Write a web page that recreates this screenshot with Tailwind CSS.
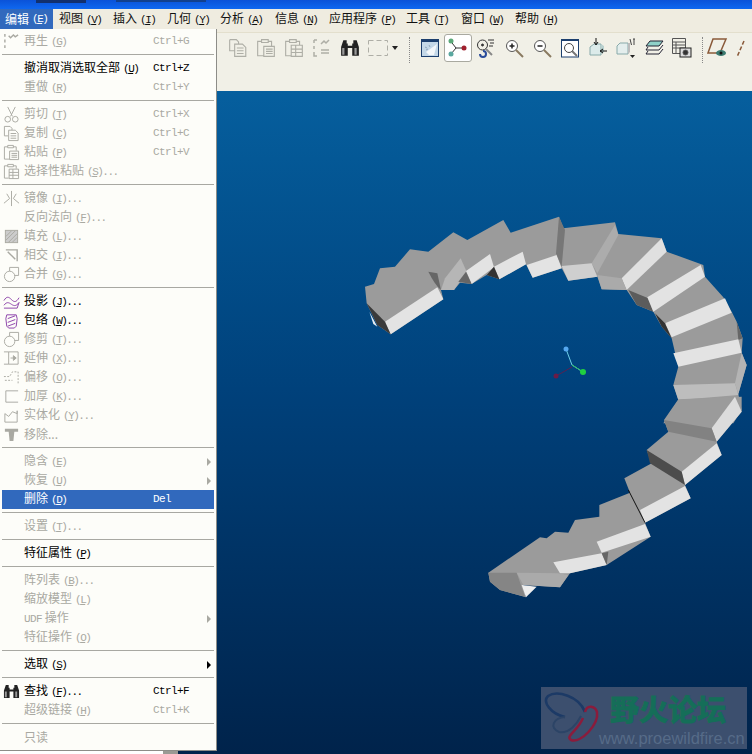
<!DOCTYPE html>
<html lang="zh-CN">

<head>
  <meta charset="UTF-8" />
  <title>Pro/E 编辑菜单</title>
  <script src="https://cdn.jsdelivr.net/npm/@tailwindcss/browser@4"></script>
</head>

<body class="bg-[#ece9d8]">
  <!-- icons shared by menu and toolbar -->
  <svg class="hidden">
    <symbol id="i-copy" viewBox="0 0 18 18"><path d="M1.500 1.500h6l2 2v2M1.500 1.500v10h4M6 5.500h7l3 3v8H6zM8 9h6M8 11.500h6M8 14h6" fill="none" stroke="currentColor" /></symbol>
    <symbol id="i-paste" viewBox="0 0 18 18"><path d="M5 3H1.500v13H7M11 3h3v4M5 1.500h6V4H5zM7 7.500h9.500v9H7zM9 10h6M9 12h6M9 14h6" fill="none" stroke="currentColor" /></symbol>
    <symbol id="i-pastes" viewBox="0 0 18 18"><path d="M5 3H1.500v13H6M11 3h3v3M5 1.500h6V4H5zM6.500 6.500h10v10h-10zM6.500 10h10M6.500 13h10M10.500 6.500v10" fill="none" stroke="currentColor" /></symbol>
    <symbol id="i-regen" viewBox="0 0 18 18"><path d="M2 1v3M2 7v3M2 13v3M6 3l2 2 3-3 2 2 3-2" fill="none" stroke="currentColor" stroke-width="1.500" /></symbol>
    <symbol id="i-bino" viewBox="0 0 18 18"><path d="M1 8l2-6h3v3h1v2h4V5h1V2h3l2 6v8h-6V9H7v7H1z" fill="#222" /><path d="M2 9h2v6H2zM13 9h2v6h-2z" fill="#999" /></symbol>
    <symbol id="i-merge" viewBox="0 0 18 18"><circle cx="7" cy="11" r="5.500" fill="none" stroke="currentColor" /><path d="M7 5.500V1.500h9.500V10H12.500" fill="none" stroke="currentColor" /></symbol>
  </svg>

  <div class="relative w-[752px] h-[754px] overflow-hidden flex flex-col font-['Noto_Sans_CJK_SC',sans-serif] text-[12px] leading-none [&_i]:not-italic [&_i]:font-['Liberation_Mono',monospace] [&_i]:text-[11px] [&_i]:tracking-[-1.500px] [&_i]:ml-[3px]">

    <!-- title bar, cut off by the crop -->
    <div class="h-[9px] shrink-0 flex items-start bg-gradient-to-b from-[#0b52d8] to-[#0f68f0]">
      <div class="ml-[36px] w-[50px] h-[3px] bg-[#12306e]"></div>
      <div class="ml-[30px] w-[90px] h-[2px] bg-[#12408e]"></div>
    </div>

    <!-- menu bar -->
    <div class="h-[23px] shrink-0 bg-[#efece0] text-[#111]">
      <div class="flex h-[20px] items-center">
        <div class="flex h-full w-[53px] items-center pl-[5px] bg-[#3169bd] text-white">编辑<i>(<u>E</u>)</i></div>
        <div class="w-[54px] pl-[6px]">视图<i>(<u>V</u>)</i></div>
        <div class="w-[54px] pl-[6px]">插入<i>(<u>I</u>)</i></div>
        <div class="w-[53px] pl-[6px]">几何<i>(<u>Y</u>)</i></div>
        <div class="w-[55px] pl-[6px]">分析<i>(<u>A</u>)</i></div>
        <div class="w-[54px] pl-[6px]">信息<i>(<u>N</u>)</i></div>
        <div class="w-[77px] pl-[6px]">应用程序<i>(<u>P</u>)</i></div>
        <div class="w-[55px] pl-[6px]">工具<i>(<u>T</u>)</i></div>
        <div class="w-[54px] pl-[6px]">窗口<i>(<u>W</u>)</i></div>
        <div class="w-[54px] pl-[6px]">帮助<i>(<u>H</u>)</i></div>
      </div>
    </div>

    <!-- toolbar -->
    <div class="h-[59px] shrink-0 bg-[#f1f0e7] border-t border-[#e3dfcd] pl-[224px] flex items-start text-[#aeaea6]">
      <div class="w-[28px] h-[28px] mt-[1px] flex items-center justify-center"><svg class="w-[20px] h-[20px]"><use href="#i-copy" /></svg></div>
      <div class="w-[28px] h-[28px] mt-[1px] flex items-center justify-center"><svg class="w-[20px] h-[20px]"><use href="#i-paste" /></svg></div>
      <div class="w-[28px] h-[28px] mt-[1px] flex items-center justify-center"><svg class="w-[20px] h-[20px]"><use href="#i-pastes" /></svg></div>
      <div class="w-[28px] h-[28px] mt-[1px] flex items-center justify-center"><svg class="w-[20px] h-[20px]" viewBox="0 0 20 20" fill="none" stroke="currentColor" stroke-width="1.500"><path d="M2 2h3M2 2v3M2 8v3M2 14v4h3M9 6l3-3 2 2 3-3M9 12h8M9 15h8" /></svg></div>
      <div class="w-[28px] h-[28px] mt-[1px] flex items-center justify-center"><svg class="w-[20px] h-[20px]"><use href="#i-bino" /></svg></div>
      <div class="w-[28px] h-[28px] mt-[1px] flex items-center justify-center"><svg class="w-[20px] h-[16px]" viewBox="0 0 20 16" fill="none" stroke="currentColor"><path d="M.5 .5h19v15H.5z" stroke-dasharray="5 3" /></svg></div>
      <div class="w-[9px] h-[28px] mt-[1px] flex items-center"><div class="w-0 h-0 border-x-[3px] border-x-transparent border-t-[4px] border-t-[#222]"></div></div>
      <div class="ml-[8px] mt-[4px] h-[26px] w-px border-l border-dotted border-[#888]"></div>
      <div class="ml-[6px] w-[28px] h-[28px] mt-[1px] flex items-center justify-center">
        <svg class="w-[18px] h-[18px]" viewBox="0 0 18 18"><rect width="18" height="18" fill="#1c3f6e" /><rect x="1" y="3" width="16" height="14" fill="#c4d8e8" /><path d="M16 5L5 13l3 3h5z" fill="#f4f8fb" /><path d="M4 8l2 1M5 11l2-1M8 6l1 2" stroke="#8fa7bd" /></svg>
      </div>
      <!-- datum display toggle, pressed -->
      <div class="w-[28px] h-[28px] mt-[1px] flex items-center justify-center rounded-[3px] bg-white border border-[#a9a9a0]">
        <svg class="w-[20px] h-[20px]" viewBox="0 0 20 20" fill="none"><path d="M2.500 3L8 10l-5 6M8 10h10" stroke="#333" /><circle cx="3" cy="3" r="2.500" fill="#5aa878" /><circle cx="3" cy="16" r="2.500" fill="#5aa8a0" /><circle cx="16" cy="10" r="2.500" fill="#a0202e" /></svg>
      </div>
      <div class="w-[28px] h-[28px] mt-[1px] flex items-center justify-center">
        <svg class="w-[20px] h-[20px]" viewBox="0 0 20 20" fill="none" stroke="#333"><circle cx="6.500" cy="7" r="5" /><circle cx="6.500" cy="7" r="1" fill="#333" /><path d="M10 11l6 6" stroke="#888" stroke-width="2" /><path d="M12 2h6M14 5h4M13 8h4" /><path d="M4 16a3 3 0 1 0 3-3" stroke="#2a4c9a" stroke-width="2" /></svg>
      </div>
      <div class="w-[28px] h-[28px] mt-[1px] flex items-center justify-center">
        <svg class="w-[19px] h-[19px]" viewBox="0 0 19 19" fill="none"><circle cx="7" cy="7" r="5.500" fill="#fff" stroke="#555" /><path d="M4.500 7h5M7 4.500v5" stroke="#222" stroke-width="1.500" /><path d="M11 11l7 7" stroke="#8a7a60" stroke-width="2" /></svg>
      </div>
      <div class="w-[28px] h-[28px] mt-[1px] flex items-center justify-center">
        <svg class="w-[19px] h-[19px]" viewBox="0 0 19 19" fill="none"><circle cx="7" cy="7" r="5.500" fill="#fff" stroke="#555" /><path d="M4.500 7h5" stroke="#222" stroke-width="1.500" /><path d="M11 11l7 7" stroke="#8a7a60" stroke-width="2" /></svg>
      </div>
      <div class="w-[28px] h-[28px] mt-[1px] flex items-center justify-center">
        <svg class="w-[18px] h-[19px]" viewBox="0 0 18 19" fill="none"><rect x=".5" y="1" width="17" height="17" fill="#fff" stroke="#1c3f6e" /><rect x="0" y="0" width="18" height="2" fill="#1c3f6e" /><circle cx="8" cy="9" r="4.500" stroke="#444" /><path d="M11 12l5 5" stroke="#777" stroke-width="2" /></svg>
      </div>
      <div class="w-[28px] h-[28px] mt-[1px] flex items-center justify-center">
        <svg class="w-[19px] h-[20px]" viewBox="0 0 19 20" fill="none"><path d="M1 9l4-3h7v11H1z" fill="#dcebea" stroke="#8aa" /><path d="M12 6v11l3-3V8z" fill="#b8d0ce" /><path d="M7 0v6M5 4l2 3 2-3M18 13h-6M14 11l-3 2 3 2" stroke="#111" /></svg>
      </div>
      <div class="w-[28px] h-[28px] mt-[1px] flex items-center justify-center relative">
        <svg class="w-[20px] h-[20px]" viewBox="0 0 20 20" fill="none"><path d="M1 8l3-3h8v11H1z" fill="#e4eeed" stroke="#8aa" /><path d="M12 5v11l2-2V5z" fill="#bbb" /><path d="M14 1l1.500 6M18 1v6M19 1h-2" stroke="#444" /><path d="M14 17h5l-2.500 3z" fill="#222" /></svg>
      </div>
      <div class="w-[28px] h-[28px] mt-[1px] flex items-center justify-center">
        <svg class="w-[19px] h-[17px]" viewBox="0 0 19 17" fill="none" stroke="#223"><path d="M5 1h13l-4 5H1z" fill="#8fd0c8" /><path d="M3 7L1 10h13l4-5M3 11l-2 3h13l4-5" /></svg>
      </div>
      <div class="w-[28px] h-[28px] mt-[1px] flex items-center justify-center">
        <svg class="w-[20px] h-[20px]" viewBox="0 0 20 20" fill="none" stroke="#555"><path d="M.5 .5h13v15H.5zM.5 4h13M.5 7h13M.5 10h13M4 4v11" /><rect x="8" y="10" width="11" height="9" fill="#ddd" stroke="#222" /><circle cx="13.500" cy="14.500" r="2.500" fill="#333" /></svg>
      </div>
      <div class="ml-[6px] mt-[4px] h-[26px] w-px border-l border-dotted border-[#888]"></div>
      <div class="w-[28px] h-[28px] mt-[1px] flex items-center justify-center">
        <svg class="w-[21px] h-[20px]" viewBox="0 0 21 20" fill="none"><path d="M6 1h13l-6 14H1z" stroke="#8a5a3a" stroke-width="1.500" /><ellipse cx="14" cy="15" rx="5" ry="3" fill="#3c7a70" /><circle cx="14" cy="15" r="1.500" fill="#111" /></svg>
      </div>
      <div class="ml-[5px] mt-[7px]">
        <svg class="w-[9px] h-[20px]" viewBox="0 0 9 20" fill="none"><path d="M8 1L1 17" stroke="#8a5a3a" stroke-width="1.500" stroke-dasharray="4 2" /></svg>
      </div>
    </div>

    <!-- work area -->
    <div class="flex-1 flex min-h-0">
      <div class="w-[178px] shrink-0 bg-white flex items-end justify-end">
        <div class="w-[15px] h-[4px] bg-[#9a9a94]"></div>
      </div>
      <div class="relative flex-1 bg-gradient-to-b from-[#065f9e] via-[#00417b] via-45% to-[#00234b]">
        <!-- 3D stair model -->
        <svg class="block w-[574px] h-[663px]" viewBox="178 91 574 663">
          <g transform="translate(360 210) scale(.33333)">
            <!-- body behind the faces, closes the cracks between steps -->
            <path d="M15 230L42 222L60 175L105 170L150 118L205 125L280 67L322 90L430 30L452 68L597 20L610 55L765 37L775 72L905 85L920 125L1030 165L1035 200L1090 262L1115 305L1130 335L1148 385L1145 428L1160 465L1135 552L1145 600L1120 640L910 640L955 570L940 525L955 470L935 385L905 350L880 305L830 285L800 240L725 238L712 200L625 212L605 175L518 203L498 163L418 208L380 195L335 222L300 218L282 240L243 240L250 268L92 373L52 345L20 280z" fill="#9b9b9b" />
            <!-- step A -->
            <path d="M75 335L232 232L250 268L92 373z" fill="#e3e3e3" />
            <path d="M20 280L75 335L92 373L52 345z" fill="#3a3a3a" />
            <path d="M28 305L52 350L40 342z" fill="#e8eef4" />
            <!-- step B -->
            <path d="M205 185Q225 225 243 240L232 190z" fill="#666" />
            <path d="M302 145L320 185L282 240L243 240L255 205z" fill="#b6b6b6" />
            <!-- step C -->
            <path d="M318 183L390 132L402 172L335 222z" fill="#e3e3e3" />
            <path d="M295 215L318 185L335 222z" fill="#666" />
            <!-- step D -->
            <path d="M402 170L488 125L498 163L418 208z" fill="#e3e3e3" />
            <path d="M380 195L402 170L418 208z" fill="#333" />
            <path d="M500 165L590 135L605 175L518 203z" fill="#e3e3e3" />
            <path d="M597 20L615 60L605 170L588 130z" fill="#777" />
            <!-- step E -->
            <path d="M695 160L765 45L775 75L712 190z" fill="#acacac" />
            <path d="M605 168L695 160L712 200L625 212z" fill="#cfcfcf" />
            <!-- step F -->
            <path d="M905 85L920 125L800 240L785 205z" fill="#e0e0e0" />
            <path d="M712 195L785 205L800 240L725 238z" fill="#aaa" />
            <!-- step G -->
            <path d="M805 240L865 265L880 305L830 285z" fill="#5c5c5c" />
            <path d="M1022 165L1035 200L880 305L862 262z" fill="#e3e3e3" />
            <!-- step H -->
            <path d="M1095 265L1115 308L935 382L915 340z" fill="#e3e3e3" />
            <path d="M885 310L915 340L935 385L905 350z" fill="#333" />
            <!-- step I -->
            <path d="M1130 335L1148 385L1135 390z" fill="#666" />
            <path d="M940 430L1135 388L1145 428L955 470z" fill="#e3e3e3" />
            <!-- step J -->
            <path d="M1145 428L1160 465L1135 552L1125 520z" fill="#b4b4b4" />
            <path d="M940 525L1125 520L1135 555L955 570z" fill="#bdbdbd" />
          </g>
          <g transform="translate(480 400) scale(.33333)">
            <path d="M595 -2L785 -10L785 35L710 125L725 165L615 255L632 295L495 368L512 410L380 495L270 520L240 562L130 555L138 592L60 570L30 545L25 518L180 412L200 415L225 395L265 398L285 360L358 350L358 315L450 278L433 235L515 190L500 150L565 95L552 60z" fill="#9b9b9b" />
            <!-- step K -->
            <path d="M765 -10L785 35L710 125L695 85z" fill="#dcdcdc" />
            <path d="M552 60L695 85L710 125L565 95z" fill="#828282" />
            <!-- step L -->
            <path d="M605 215L710 130L725 165L615 255z" fill="#e3e3e3" />
            <path d="M500 150L605 215L615 255L510 190z" fill="#4c4c4c" />
            <!-- step M -->
            <path d="M480 330L615 258L632 295L495 368z" fill="#e3e3e3" />
            <path d="M445 270L495 368" stroke="#111" stroke-width="3" />
            <!-- step N -->
            <path d="M350 425L495 372L512 410L365 458z" fill="#e3e3e3" />
            <!-- step O -->
            <path d="M220 487L365 460L380 495L270 520L240 520z" fill="#e3e3e3" />
            <path d="M365 460L385 455L380 495z" fill="#666" />
            <!-- step P -->
            <path d="M25 518L110 518L135 590L60 570L30 545z" fill="#858585" />
            <path d="M110 518L235 520L265 525L240 562L130 555z" fill="#aaa" />
            <path d="M125 555L170 560L138 592z" fill="#eee" />
          </g>
          <!-- datum triad -->
          <path d="M566 349L572 365L583 372" fill="none" stroke="#6fd0e8" />
          <path d="M572 365L583 372" fill="none" stroke="#30c060" />
          <path d="M572 367L556 376" fill="none" stroke="#5a2050" />
          <circle cx="566" cy="349" r="2.500" fill="#55a8f0" />
          <circle cx="583" cy="372" r="3" fill="#20d040" />
          <circle cx="556" cy="376" r="2.500" fill="#6a1c48" />
        </svg>

        <!-- forum watermark -->
        <div class="absolute right-[5px] bottom-[5px] w-[206px] h-[62px] bg-[#3c4f6e] overflow-hidden">
          <svg class="absolute left-[2px] top-[3px] w-[58px] h-[56px]" viewBox="0 0 58 56" fill="none">
            <path d="M42 22C36 6 14 0 5 6C-1 12 8 24 22 27" stroke="#1c3a66" stroke-width="2.500" />
            <path d="M42 22C44 14 52 16 54 22C56 34 38 54 28 50C22 46 34 42 40 28" stroke="#8a1c3c" stroke-width="2.500" />
            <path d="M22 27C10 28 6 38 16 42C26 44 34 34 38 26" stroke="#2c4466" stroke-width="2" />
          </svg>
          <div class="absolute left-[69px] top-[5px] text-[29px] font-bold leading-[32px] whitespace-nowrap text-[#156e58] [-webkit-text-stroke:1px_#156e58]">野火论坛</div>
          <div class="absolute left-[58px] top-[42px] font-['Liberation_Sans',sans-serif] text-[16.500px] leading-[18px] whitespace-nowrap text-[#566b88]">www.proewildfire.cn</div>
        </div>
      </div>
    </div>

    <!-- edit menu, open over the window -->
    <div class="absolute left-0 top-[29px] w-[217px] pt-[3px] pb-[3px] px-[2px] bg-[#fdfdf9] border-r border-b border-[#8d8d88] text-[#a9a9a2] [&>div]:h-[19px] [&>div]:flex [&>div]:items-center [&>div>span]:w-[129px] [&>div>span]:whitespace-nowrap [&>div>span]:-mt-[1px] [&>div>svg]:w-[17px] [&>div>svg]:h-[17px] [&>div>svg]:mr-[4px] [&>div>svg]:ml-[1px] [&>hr]:mt-[3px] [&>hr]:mb-[4px] [&>hr]:h-px [&>hr]:border-0 [&>hr]:bg-[#a8a8a2] [&_b]:font-normal [&_b]:font-['Liberation_Mono',monospace] [&_b]:text-[11px] [&_b]:tracking-[-0.600px]">
      <div><svg><use href="#i-regen" /></svg><span>再生<i>(<u>G</u>)</i></span><b>Ctrl+G</b></div>
      <hr />
      <div class="text-black"><em class="w-[22px]"></em><span>撤消取消选取全部<i>(<u>U</u>)</i></span><b>Ctrl+Z</b></div>
      <div><em class="w-[22px]"></em><span>重做<i>(<u>R</u>)</i></span><b>Ctrl+Y</b></div>
      <hr />
      <div><svg viewBox="0 0 18 18" fill="none" stroke="currentColor"><path d="M5 1l5 10M13 1L8 11" /><circle cx="5" cy="14" r="3" /><circle cx="13" cy="14" r="3" /></svg><span>剪切<i>(<u>T</u>)</i></span><b>Ctrl+X</b></div>
      <div><svg><use href="#i-copy" /></svg><span>复制<i>(<u>C</u>)</i></span><b>Ctrl+C</b></div>
      <div><svg><use href="#i-paste" /></svg><span>粘贴<i>(<u>P</u>)</i></span><b>Ctrl+V</b></div>
      <div><svg><use href="#i-pastes" /></svg><span>选择性粘贴<i>(<u>S</u>)...</i></span></div>
      <hr />
      <div><svg viewBox="0 0 18 18" fill="none" stroke="currentColor"><path d="M9 1v16M1 14l6-5-3-5M17 14l-6-5 3-5" /></svg><span>镜像<i>(<u>I</u>)...</i></span></div>
      <div><em class="w-[22px]"></em><span>反向法向<i>(<u>F</u>)...</i></span></div>
      <div><svg viewBox="0 0 18 18" fill="none" stroke="currentColor"><rect x="2.500" y="2.500" width="13" height="13" fill="#ccc" /><path d="M3 9l6-6M3 13l10-10M6 15l9-9M10 15l5-5" /></svg><span>填充<i>(<u>L</u>)...</i></span></div>
      <div><svg viewBox="0 0 18 18" fill="none" stroke="currentColor" stroke-width="1.500"><path d="M3 3h12v12M5 5l8 8" /></svg><span>相交<i>(<u>I</u>)...</i></span></div>
      <div><svg><use href="#i-merge" /></svg><span>合并<i>(<u>G</u>)...</i></span></div>
      <hr />
      <div class="text-black"><svg viewBox="0 0 18 18" fill="none" stroke="#8a3fa8"><path d="M1 8c3-5 5-4 8-1s5 3 8-2M1 13c3-4 5-3 8-1s5 2 8-2M1 16h14l2-6" /></svg><span>投影<i>(<u>J</u>)...</i></span></div>
      <div class="text-black"><svg viewBox="0 0 18 18" fill="none" stroke="#8a3fa8"><path d="M4 3h10l1 4-1 8-2 2H6l-2-2-1-8zM5 7l8-3M5 11l8-3M5 15l8-3" /></svg><span>包络<i>(<u>W</u>)...</i></span></div>
      <div><svg><use href="#i-merge" /></svg><span>修剪<i>(<u>T</u>)...</i></span></div>
      <div><svg viewBox="0 0 18 18" fill="none" stroke="currentColor"><path d="M1 2h5v13H1M6 2h10v13H6M8 8.500h5" /><path d="M11 6l3 2.500-3 2.500z" fill="currentColor" /></svg><span>延伸<i>(<u>X</u>)...</i></span></div>
      <div><svg viewBox="0 0 18 18" fill="none" stroke="currentColor" stroke-dasharray="2 1.500"><path d="M1 8h6l3-5h6v13" /><path d="M2 12h8" /></svg><span>偏移<i>(<u>O</u>)...</i></span></div>
      <div><svg viewBox="0 0 18 18" fill="none" stroke="currentColor"><path d="M3 3v12h13M3 3h13" /></svg><span>加厚<i>(<u>K</u>)...</i></span></div>
      <div><svg viewBox="0 0 18 18" fill="none" stroke="currentColor"><path d="M2 7l4 3 4-5 5 2v-3M2 7v9h13V4" /></svg><span>实体化<i>(<u>Y</u>)...</i></span></div>
      <div><svg viewBox="0 0 18 18" fill="currentColor"><path d="M2 3h14v3h-4l-1 10H7L6 6H2z" /></svg><span>移除...</span></div>
      <hr />
      <div><em class="w-[22px]"></em><span>隐含<i>(<u>E</u>)</i></span><s class="ml-auto mr-[3px] w-0 h-0 border-y-[4px] border-y-transparent border-l-[4px] border-l-[#a9a9a2]"></s></div>
      <div><em class="w-[22px]"></em><span>恢复<i>(<u>U</u>)</i></span><s class="ml-auto mr-[3px] w-0 h-0 border-y-[4px] border-y-transparent border-l-[4px] border-l-[#a9a9a2]"></s></div>
      <div class="bg-[#3169bd] text-white"><em class="w-[22px]"></em><span>删除<i>(<u>D</u>)</i></span><b>Del</b></div>
      <hr />
      <div><em class="w-[22px]"></em><span>设置<i>(<u>T</u>)...</i></span></div>
      <hr />
      <div class="text-black"><em class="w-[22px]"></em><span>特征属性<i>(<u>P</u>)</i></span></div>
      <hr />
      <div><em class="w-[22px]"></em><span>阵列表<i>(<u>B</u>)...</i></span></div>
      <div><em class="w-[22px]"></em><span>缩放模型<i>(<u>L</u>)</i></span></div>
      <div><em class="w-[22px]"></em><span><b>UDF</b> 操作</span><s class="ml-auto mr-[3px] w-0 h-0 border-y-[4px] border-y-transparent border-l-[4px] border-l-[#a9a9a2]"></s></div>
      <div><em class="w-[22px]"></em><span>特征操作<i>(<u>O</u>)</i></span></div>
      <hr />
      <div class="text-black"><em class="w-[22px]"></em><span>选取<i>(<u>S</u>)</i></span><s class="ml-auto mr-[3px] w-0 h-0 border-y-[4px] border-y-transparent border-l-[4px] border-l-black"></s></div>
      <hr />
      <div class="text-black"><svg><use href="#i-bino" /></svg><span>查找<i>(<u>F</u>)...</i></span><b>Ctrl+F</b></div>
      <div><em class="w-[22px]"></em><span>超级链接<i>(<u>H</u>)</i></span><b>Ctrl+K</b></div>
      <hr />
      <div><em class="w-[22px]"></em><span>只读</span></div>
    </div>
  </div>
</body>

</html>
